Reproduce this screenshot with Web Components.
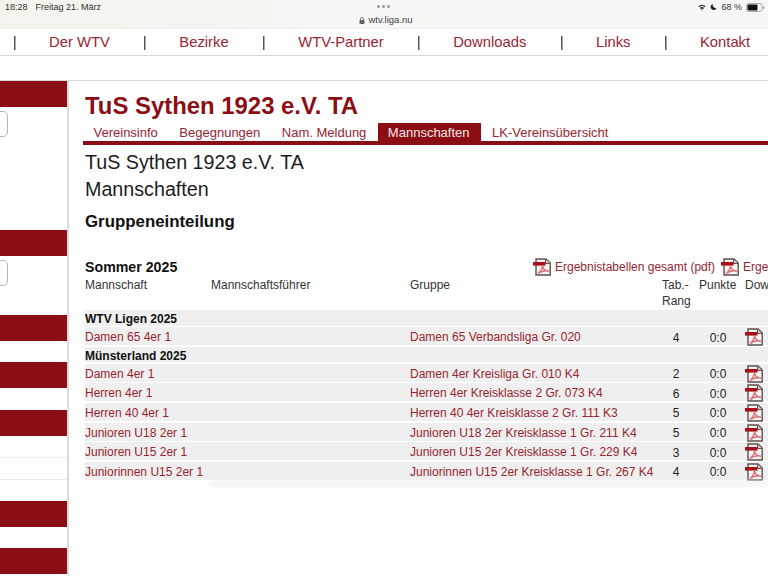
<!DOCTYPE html>
<html lang="de">
<head>
<meta charset="utf-8">
<title>TuS Sythen 1923 e.V. TA</title>
<style>
  html, body { margin: 0; height: 576px; overflow: hidden; background: #fff; }
  body { font-family: "Liberation Sans", Arial, sans-serif; color: #1c1c1c; }
</style>
</head>
<body>
<status-bar></status-bar>
<main-nav></main-nav>
<page-layout>
  <side-bar slot="side"></side-bar>
  <club-page slot="main"></club-page>
</page-layout>

<script>
const RED = '#8b0e15';
const LINK = '#982530';

const status_template = document.createElement('template');
status_template.innerHTML = `
  <style>
    :host{
      display: block;
      position: relative;
      height: 28px;
      background: linear-gradient(90deg, #f5f3ec, #f6f6f5 45%);
      font-size: 9px;
      color: #333;
    }
    #row{
      display: flex;
      align-items: center;
      height: 14px;
      padding: 0 3px 0 5px;
    }
    #date{ margin-left: 8px; }
    #right{
      margin-left: auto;
      display: flex;
      align-items: center;
      gap: 4px;
    }
    #dots{
      position: absolute;
      left: 377px;
      top: 5px;
      display: flex;
      gap: 2px;
    }
    #dots i{
      width: 3px;
      height: 3px;
      border-radius: 50%;
      background: #9a9a9a;
    }
    #url{
      display: flex;
      justify-content: center;
      align-items: center;
      gap: 3px;
      font-size: 9.5px;
      color: #444;
      line-height: 12px;
      padding-left: 4px;
    }
  </style>
  <div id="row">
    <span>18:28</span><span id="date">Freitag 21. März</span>
    <div id="right">
      <svg width="8" height="7" viewBox="0 0 10 8"><path d="M0.5 2.6 A6.5 6.5 0 0 1 9.5 2.6 L8.4 3.8 A5 5 0 0 0 1.6 3.8Z M2.4 4.6 A3.8 3.8 0 0 1 7.6 4.6 L6.5 5.8 A2.2 2.2 0 0 0 3.5 5.8Z M4 6.7 A1.5 1.5 0 0 1 6 6.7 L5 7.8Z" fill="#222"/></svg>
      <svg width="7" height="8" viewBox="0 0 9 9"><path d="M3.6 0.6 A4 4 0 1 0 8.5 5.9 A4.2 4.2 0 0 1 3.6 0.6Z" fill="#222"/></svg>
      <span>68 %</span>
      <svg width="19" height="9" viewBox="0 0 19 9"><rect x="0.5" y="0.5" width="15.5" height="8" rx="2" fill="none" stroke="#aaa"/><rect x="1.5" y="1.5" width="10" height="6" rx="1" fill="#111"/><path d="M17 3 a1.5 1.5 0 0 1 0 3Z" fill="#aaa"/></svg>
    </div>
  </div>
  <div id="dots"><i></i><i></i><i></i></div>
  <div id="url">
    <svg width="6" height="7" viewBox="0 0 6 7"><path d="M1.5 3 V2 a1.5 1.5 0 0 1 3 0 V3" fill="none" stroke="#666" stroke-width=".8"/><rect x=".5" y="3" width="5" height="4" rx=".6" fill="#666"/></svg>
    <span>wtv.liga.nu</span>
  </div>
`;

class StatusBar extends HTMLElement{
  constructor() {
    super();
    this.attachShadow({mode: 'open'});
    this.shadowRoot.appendChild(status_template.content.cloneNode(true));
  }
}
customElements.define('status-bar', StatusBar);

const nav_template = document.createElement('template');
nav_template.innerHTML = `
  <style>
    :host{
      display: block;
      height: 26px;
      background: #fff;
      border-top: 1px solid #efefef;
      border-bottom: 1px solid #d6d6d6;
      overflow: hidden;
    }
    ul{
      display: flex;
      margin: 0;
      padding: 0 0 0 14px;
      list-style: none;
      font-size: 14.8px;
      line-height: 27px;
      white-space: nowrap;
      color: ${LINK};
    }
    li{
      padding: 0 34.5px 0 35px;
      background: linear-gradient(#555, #555) 0 7px / 1.5px 14px no-repeat;
    }
  </style>
  <ul>
    <li>Der WTV</li>
    <li>Bezirke</li>
    <li>WTV-Partner</li>
    <li>Downloads</li>
    <li>Links</li>
    <li>Kontakt</li>
  </ul>
`;

class MainNav extends HTMLElement{
  constructor() {
    super();
    this.attachShadow({mode: 'open'});
    this.shadowRoot.appendChild(nav_template.content.cloneNode(true));
  }
}
customElements.define('main-nav', MainNav);

const layout_template = document.createElement('template');
layout_template.innerHTML = `
  <style>
    :host{
      display: flex;
      margin-top: 24px;
      border-top: 1px solid #d8d8d8;
      height: 495px;
    }
    #side{
      flex: 0 0 67px;
      overflow: hidden;
      border-right: 2px solid #dcdcdc;
    }
    #main{
      flex: 1;
      min-width: 0;
      overflow: hidden;
    }
  </style>
  <div id="side"><slot name="side"></slot></div>
  <div id="main"><slot name="main"></slot></div>
`;

class PageLayout extends HTMLElement{
  constructor() {
    super();
    this.attachShadow({mode: 'open'});
    this.shadowRoot.appendChild(layout_template.content.cloneNode(true));
  }
}
customElements.define('page-layout', PageLayout);

const side_box_template = document.createElement('template');
side_box_template.innerHTML = `
  <style>
    :host{ display: block; }
    #band{ height: 26px; background: ${RED}; }
    #input{
      display: none;
      margin: 4px 0 0 -20px;
      width: 28px;
      height: 26px;
      box-sizing: border-box;
      border: 1px solid #b5b5b5;
      border-radius: 5px;
    }
    #lines div{ height: 21px; border-bottom: 1px solid #ececec; }
  </style>
  <div id="band"></div>
  <div id="input"></div>
  <div id="lines"></div>
`;

class SideBox extends HTMLElement{
  constructor() {
    super();
    this.attachShadow({mode: 'open'});
    this.shadowRoot.appendChild(side_box_template.content.cloneNode(true));
    this.style.height = this.getAttribute('h') + 'px';
    if(this.hasAttribute('input')){
      this.shadowRoot.querySelector('#input').style.display = 'block';
    }
    const lines = Number(this.getAttribute('lines') || 0);
    for(let i = 0; i < lines; i++){
      this.shadowRoot.querySelector('#lines').appendChild(document.createElement('div'));
    }
  }
}
customElements.define('side-box', SideBox);

const side_template = document.createElement('template');
side_template.innerHTML = `
  <style>
    :host{ display: block; }
  </style>
  <side-box h="149" input></side-box>
  <side-box h="85" input></side-box>
  <side-box h="47"></side-box>
  <side-box h="48"></side-box>
  <side-box h="91" lines="2"></side-box>
  <side-box h="47"></side-box>
  <side-box h="27"></side-box>
`;

class SideBar extends HTMLElement{
  constructor() {
    super();
    this.attachShadow({mode: 'open'});
    this.shadowRoot.appendChild(side_template.content.cloneNode(true));
  }
}
customElements.define('side-bar', SideBar);

// the acrobat page icon used in the table and above it
const pdf_template = document.createElement('template');
pdf_template.innerHTML = `
  <style>
    :host{ display: inline-block; width: 19px; height: 18px; line-height: 0; }
  </style>
  <svg width="19" height="18" viewBox="0 0 19 18">
    <path d="M3 1 H13 L17.2 5 V17 H3Z" fill="#f8f2f2" stroke="#5c5050" stroke-width="1.4"/>
    <path d="M12.5 1.5 V5.5 H17" fill="#cfcaca" stroke="#5c5050" stroke-width="1"/>
    <rect x="0" y="4" width="12.5" height="3.6" fill="#a80f1c"/>
    <path d="M5 15.5 C7.5 13.5 9.5 10 9.6 7.5 C9.8 11 12 13 16 13.2 C12.5 12.4 8 13.4 5 15.5Z" fill="none" stroke="#d8747a" stroke-width="1.5"/>
  </svg>
`;

class PdfIcon extends HTMLElement{
  constructor() {
    super();
    this.attachShadow({mode: 'open'});
    this.shadowRoot.appendChild(pdf_template.content.cloneNode(true));
  }
}
customElements.define('pdf-icon', PdfIcon);

const tabs_template = document.createElement('template');
tabs_template.innerHTML = `
  <style>
    :host{
      display: flex;
      margin-left: 13.5px;
      border-bottom: 4px solid ${RED};
      height: 18px;
      font-size: 13px;
      line-height: 20px;
      color: ${LINK};
      white-space: nowrap;
    }
    span{ padding: 0 10.5px 0 11px; }
    #meld{ padding-right: 11.5px; }
    .active{ background: ${RED}; color: #f4e6e6; padding: 0 11.5px 0 10px; }
  </style>
  <span>Vereinsinfo</span>
  <span>Begegnungen</span>
  <span id="meld">Nam. Meldung</span>
  <span class="active">Mannschaften</span>
  <span>LK-Vereinsübersicht</span>
`;

class ClubTabs extends HTMLElement{
  constructor() {
    super();
    this.attachShadow({mode: 'open'});
    this.shadowRoot.appendChild(tabs_template.content.cloneNode(true));
  }
}
customElements.define('club-tabs', ClubTabs);

const COLUMNS = '126px 199px 252px 37px 46px 1fr';

const row_template = document.createElement('template');
row_template.innerHTML = `
  <style>
    :host{
      display: grid;
      grid-template-columns: ${COLUMNS};
      height: 18px;
      margin-bottom: 1.6px;
      align-items: center;
      background: #efefef;
      font-size: 12px;
      white-space: nowrap;
      color: ${LINK};
    }
    #team, #group{ padding-bottom: 2px; }
    .num{ color: #222; text-align: center; padding-bottom: 1px; }
    #rang{ padding-right: 9px; }
    #punkte{ padding-right: 8px; }
    pdf-icon{ margin-top: 1px; }
  </style>
  <span id="team"></span>
  <span></span>
  <span id="group"></span>
  <span class="num" id="rang"></span>
  <span class="num" id="punkte"></span>
  <span><pdf-icon></pdf-icon></span>
`;

class TeamRow extends HTMLElement{
  constructor() {
    super();
    this.attachShadow({mode: 'open'});
    this.shadowRoot.appendChild(row_template.content.cloneNode(true));
    for(const key of ['team', 'group', 'rang', 'punkte']){
      this.shadowRoot.querySelector('#' + key).textContent = this.getAttribute(key);
    }
  }
}
customElements.define('team-row', TeamRow);

const section_template = document.createElement('template');
section_template.innerHTML = `
  <style>
    :host{
      display: block;
      height: 15.5px;
      margin-bottom: 1.6px;
      background: #efefef;
      font-size: 12px;
      font-weight: bold;
      line-height: 18px;
      color: #111;
    }
  </style>
  <slot></slot>
`;

class SectionRow extends HTMLElement{
  constructor() {
    super();
    this.attachShadow({mode: 'open'});
    this.shadowRoot.appendChild(section_template.content.cloneNode(true));
  }
}
customElements.define('section-row', SectionRow);

const page_template = document.createElement('template');
page_template.innerHTML = `
  <style>
    :host{ display: block; }
    h1{
      margin: 12px 0 0 16px;
      font-size: 23.9px;
      line-height: 26px;
      color: ${RED};
      white-space: nowrap;
    }
    club-tabs{ margin-top: 4px; }
    #names{
      margin: 4px 0 0 16px;
      font-size: 19.7px;
      line-height: 27px;
      color: #1c1c1c;
    }
    h2{
      margin: 9px 0 0 16px;
      font-size: 16.85px;
      line-height: 20px;
      color: #111;
    }
    #season{
      display: flex;
      align-items: center;
      margin: 25px 0 0 16px;
      height: 20px;
      white-space: nowrap;
    }
    #season b{ font-size: 14.2px; color: #111; flex: 0 0 448px; }
    #season span{ font-size: 12px; color: ${LINK}; margin: 0 6px 0 3px; }
    #table{ position: relative; margin: -1px 0 0 16px; width: 700px; }
    #head{
      display: grid;
      grid-template-columns: ${COLUMNS};
      font-size: 12px;
      line-height: 16px;
      height: 33px;
      padding-top: 1px;
      color: #333;
      white-space: nowrap;
    }
    /* the soft smear under the blurred captain column */
    #smear{
      position: absolute;
      left: 125px;
      right: 0;
      bottom: -6px;
      height: 5px;
      background: #f1f1f1;
      filter: blur(2px);
    }
  </style>
  <h1>TuS Sythen 1923 e.V. TA</h1>
  <club-tabs></club-tabs>
  <div id="names">TuS Sythen 1923 e.V. TA<br>Mannschaften</div>
  <h2>Gruppeneinteilung</h2>
  <div id="season">
    <b>Sommer 2025</b>
    <pdf-icon></pdf-icon><span>Ergebnistabellen gesamt (pdf)</span>
    <pdf-icon></pdf-icon><span>Ergebnistabellen</span>
  </div>
  <div id="table">
    <div id="head">
      <span>Mannschaft</span>
      <span>Mannschaftsführer</span>
      <span>Gruppe</span>
      <span>Tab.-<br>Rang</span>
      <span>Punkte</span>
      <span>Download</span>
    </div>
    <section-row>WTV Ligen 2025</section-row>
    <team-row team="Damen 65 4er 1" group="Damen 65 Verbandsliga Gr. 020" rang="4" punkte="0:0"></team-row>
    <section-row>Münsterland 2025</section-row>
    <team-row team="Damen 4er 1" group="Damen 4er Kreisliga Gr. 010 K4" rang="2" punkte="0:0"></team-row>
    <team-row team="Herren 4er 1" group="Herren 4er Kreisklasse 2 Gr. 073 K4" rang="6" punkte="0:0"></team-row>
    <team-row team="Herren 40 4er 1" group="Herren 40 4er Kreisklasse 2 Gr. 111 K3" rang="5" punkte="0:0"></team-row>
    <team-row team="Junioren U18 2er 1" group="Junioren U18 2er Kreisklasse 1 Gr. 211 K4" rang="5" punkte="0:0"></team-row>
    <team-row team="Junioren U15 2er 1" group="Junioren U15 2er Kreisklasse 1 Gr. 229 K4" rang="3" punkte="0:0"></team-row>
    <team-row team="Juniorinnen U15 2er 1" group="Juniorinnen U15 2er Kreisklasse 1 Gr. 267 K4" rang="4" punkte="0:0"></team-row>
    <div id="smear"></div>
  </div>
`;

class ClubPage extends HTMLElement{
  constructor() {
    super();
    this.attachShadow({mode: 'open'});
    this.shadowRoot.appendChild(page_template.content.cloneNode(true));
  }
}
customElements.define('club-page', ClubPage);
</script>
</body>
</html>
